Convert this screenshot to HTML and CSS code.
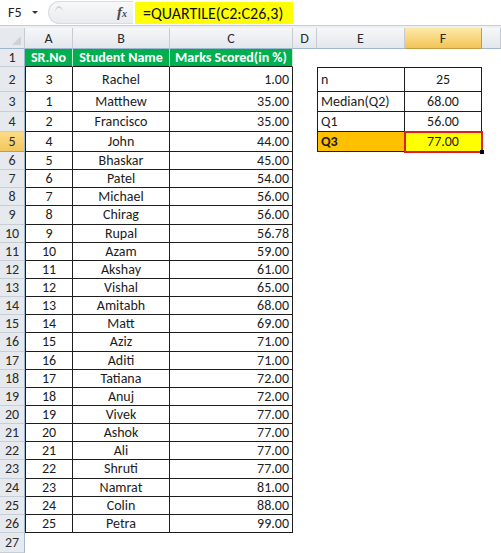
FILE: index.html
```html
<!DOCTYPE html>
<html lang="en">

<head>
    <meta charset="utf-8">
    <title>QUARTILE</title>
    <link rel="stylesheet" href="styles.css">
</head>

<body>
    <header class="formula-bar">
        <div class="name-box"><span>F5</span><span class="drop"></span></div>
        <div class="fx-zone"><span class="grip"></span><span class="fx">f<small>x</small></span></div>
        <div class="formula"><span class="formula-text">=QUARTILE(C2:C26,3)</span></div>
    </header>
    <div class="gap"></div>
    <main class="sheet">
        <div class="row heads">
            <div class="corner"><span class="tri"></span></div>
            <div class="ch">A</div>
            <div class="ch">B</div>
            <div class="ch">C</div>
            <div class="ch">D</div>
            <div class="ch">E</div>
            <div class="ch sel">F</div>
            <div class="ch"></div>
        </div>
        <div class="row r1">
            <div class="rh">1</div>
            <div class="cell hd">SR.No</div>
            <div class="cell hd">Student Name</div>
            <div class="cell hd">Marks Scored(in %)</div>
            <div class="cell"></div><div class="cell"></div><div class="cell"></div><div class="cell"></div>
        </div>
        <div class="row r2">
            <div class="rh">2</div>
            <div class="cell t tl ctr">3</div>
            <div class="cell t ctr">Rachel</div>
            <div class="cell t num">1.00</div>
            <div class="cell"></div>
            <div class="cell t tl tt">n</div>
            <div class="cell t tt ctr">25</div>
            <div class="cell"></div>
        </div>
        <div class="row r3">
            <div class="rh">3</div>
            <div class="cell t tl ctr">1</div>
            <div class="cell t ctr">Matthew</div>
            <div class="cell t num">35.00</div>
            <div class="cell"></div>
            <div class="cell t tl">Median(Q2)</div>
            <div class="cell t ctr">68.00</div>
            <div class="cell"></div>
        </div>
        <div class="row r3">
            <div class="rh">4</div>
            <div class="cell t tl ctr">2</div>
            <div class="cell t ctr">Francisco</div>
            <div class="cell t num">35.00</div>
            <div class="cell"></div>
            <div class="cell t tl">Q1</div>
            <div class="cell t ctr">56.00</div>
            <div class="cell"></div>
        </div>
        <div class="row r3">
            <div class="rh sel">5</div>
            <div class="cell t tl ctr">4</div>
            <div class="cell t ctr">John</div>
            <div class="cell t num">44.00</div>
            <div class="cell"></div>
            <div class="cell t tl q3">Q3</div>
            <div class="cell t ctr active">77.00</div>
            <div class="cell"></div>
        </div>
        <div class="row"><div class="rh">6</div><div class="cell t tl ctr">5</div><div class="cell t ctr">Bhaskar</div><div class="cell t num">45.00</div><div class="cell"></div><div class="cell"></div><div class="cell"></div><div class="cell"></div></div>
        <div class="row"><div class="rh">7</div><div class="cell t tl ctr">6</div><div class="cell t ctr">Patel</div><div class="cell t num">54.00</div><div class="cell"></div><div class="cell"></div><div class="cell"></div><div class="cell"></div></div>
        <div class="row"><div class="rh">8</div><div class="cell t tl ctr">7</div><div class="cell t ctr">Michael</div><div class="cell t num">56.00</div><div class="cell"></div><div class="cell"></div><div class="cell"></div><div class="cell"></div></div>
        <div class="row"><div class="rh">9</div><div class="cell t tl ctr">8</div><div class="cell t ctr">Chirag</div><div class="cell t num">56.00</div><div class="cell"></div><div class="cell"></div><div class="cell"></div><div class="cell"></div></div>
        <div class="row"><div class="rh">10</div><div class="cell t tl ctr">9</div><div class="cell t ctr">Rupal</div><div class="cell t num">56.78</div><div class="cell"></div><div class="cell"></div><div class="cell"></div><div class="cell"></div></div>
        <div class="row"><div class="rh">11</div><div class="cell t tl ctr">10</div><div class="cell t ctr">Azam</div><div class="cell t num">59.00</div><div class="cell"></div><div class="cell"></div><div class="cell"></div><div class="cell"></div></div>
        <div class="row"><div class="rh">12</div><div class="cell t tl ctr">11</div><div class="cell t ctr">Akshay</div><div class="cell t num">61.00</div><div class="cell"></div><div class="cell"></div><div class="cell"></div><div class="cell"></div></div>
        <div class="row"><div class="rh">13</div><div class="cell t tl ctr">12</div><div class="cell t ctr">Vishal</div><div class="cell t num">65.00</div><div class="cell"></div><div class="cell"></div><div class="cell"></div><div class="cell"></div></div>
        <div class="row"><div class="rh">14</div><div class="cell t tl ctr">13</div><div class="cell t ctr">Amitabh</div><div class="cell t num">68.00</div><div class="cell"></div><div class="cell"></div><div class="cell"></div><div class="cell"></div></div>
        <div class="row"><div class="rh">15</div><div class="cell t tl ctr">14</div><div class="cell t ctr">Matt</div><div class="cell t num">69.00</div><div class="cell"></div><div class="cell"></div><div class="cell"></div><div class="cell"></div></div>
        <div class="row"><div class="rh">16</div><div class="cell t tl ctr">15</div><div class="cell t ctr">Aziz</div><div class="cell t num">71.00</div><div class="cell"></div><div class="cell"></div><div class="cell"></div><div class="cell"></div></div>
        <div class="row"><div class="rh">17</div><div class="cell t tl ctr">16</div><div class="cell t ctr">Aditi</div><div class="cell t num">71.00</div><div class="cell"></div><div class="cell"></div><div class="cell"></div><div class="cell"></div></div>
        <div class="row"><div class="rh">18</div><div class="cell t tl ctr">17</div><div class="cell t ctr">Tatiana</div><div class="cell t num">72.00</div><div class="cell"></div><div class="cell"></div><div class="cell"></div><div class="cell"></div></div>
        <div class="row"><div class="rh">19</div><div class="cell t tl ctr">18</div><div class="cell t ctr">Anuj</div><div class="cell t num">72.00</div><div class="cell"></div><div class="cell"></div><div class="cell"></div><div class="cell"></div></div>
        <div class="row"><div class="rh">20</div><div class="cell t tl ctr">19</div><div class="cell t ctr">Vivek</div><div class="cell t num">77.00</div><div class="cell"></div><div class="cell"></div><div class="cell"></div><div class="cell"></div></div>
        <div class="row"><div class="rh">21</div><div class="cell t tl ctr">20</div><div class="cell t ctr">Ashok</div><div class="cell t num">77.00</div><div class="cell"></div><div class="cell"></div><div class="cell"></div><div class="cell"></div></div>
        <div class="row"><div class="rh">22</div><div class="cell t tl ctr">21</div><div class="cell t ctr">Ali</div><div class="cell t num">77.00</div><div class="cell"></div><div class="cell"></div><div class="cell"></div><div class="cell"></div></div>
        <div class="row"><div class="rh">23</div><div class="cell t tl ctr">22</div><div class="cell t ctr">Shruti</div><div class="cell t num">77.00</div><div class="cell"></div><div class="cell"></div><div class="cell"></div><div class="cell"></div></div>
        <div class="row"><div class="rh">24</div><div class="cell t tl ctr">23</div><div class="cell t ctr">Namrat</div><div class="cell t num">81.00</div><div class="cell"></div><div class="cell"></div><div class="cell"></div><div class="cell"></div></div>
        <div class="row"><div class="rh">25</div><div class="cell t tl ctr">24</div><div class="cell t ctr">Colin</div><div class="cell t num">88.00</div><div class="cell"></div><div class="cell"></div><div class="cell"></div><div class="cell"></div></div>
        <div class="row"><div class="rh">26</div><div class="cell t tl ctr">25</div><div class="cell t ctr">Petra</div><div class="cell t num">99.00</div><div class="cell"></div><div class="cell"></div><div class="cell"></div><div class="cell"></div></div>
        <div class="row r27"><div class="rh">27</div><div class="cell"></div><div class="cell"></div><div class="cell"></div><div class="cell"></div><div class="cell"></div><div class="cell"></div><div class="cell"></div></div>
    </main>
</body>

</html>
```

FILE: styles.css
```css
body {
    margin: 0;
    width: 501px;
    height: 553px;
    overflow: hidden;
    background-color: #ffffff;
    font-family: Carlito, Lato, "Liberation Sans", sans-serif;
    font-size: 14px;
    color: #1c1c1c;
}

/* formula bar */
.formula-bar {
    display: flex;
    height: 25px;
    border-bottom: 1px solid #c9cdd2;
    background-color: #ffffff;
}

.name-box {
    width: 45px;
    box-sizing: border-box;
    padding-left: 8px;
    display: flex;
    align-items: center;
    gap: 10px;
    font-size: 14px;
    color: #222;
}

.drop {
    width: 0;
    height: 0;
    border-left: 3px solid transparent;
    border-right: 3px solid transparent;
    border-top: 3px solid #333;
}

.fx-zone {
    width: 85px;
    margin: 1px 0 1px 3px;
    box-sizing: border-box;
    display: flex;
    align-items: center;
    justify-content: space-between;
    padding-right: 6px;
    border-radius: 12px 0 0 12px;
    border: 1px solid #d8dbe0;
    border-right: none;
    background: linear-gradient(#f7f8f9, #e9ebee);
}

.grip {
    width: 8px;
    height: 12px;
    margin-left: 6px;
    border-radius: 50%;
    border-top: 2px solid #cfd3d8;
}

.fx {
    font-family: "Liberation Serif", serif;
    font-style: italic;
    font-weight: bold;
    font-size: 15px;
    color: #4a4a4a;
}

.fx small {
    font-size: 10px;
}

.formula {
    flex: 1;
    display: flex;
    align-items: stretch;
    padding: 2px 0 1px 2px;
}

.formula-text {
    display: flex;
    align-items: center;
    padding: 0 10px 0 8px;
    background-color: #ffff00;
    font-size: 16px;
    color: #111;
}

.gap {
    height: 2px;
    background-color: #eef0f3;
}

/* sheet */
.row {
    display: grid;
    grid-template-columns: 25px 48px 97px 123px 24px 88px 77px 19px;
    height: 18.143px;
}

.heads { height: 21px; }
.r1 { height: 18px; }
.r2 { height: 25px; }
.r3 { height: 20px; }
.r27 { height: 20px; }

.corner {
    position: relative;
    background: #e6e9ee;
    border-right: 1px solid #c5cbd3;
    border-bottom: 1px solid #9eb6ce;
}

.tri {
    position: absolute;
    right: 3px;
    bottom: 3px;
    width: 0;
    height: 0;
    border-left: 9px solid transparent;
    border-bottom: 9px solid #cdd2d9;
}

.ch {
    display: flex;
    align-items: center;
    justify-content: center;
    background: linear-gradient(#f6f7f9, #e3e7ec);
    border-right: 1px solid #c5cbd3;
    border-bottom: 1px solid #9eb6ce;
    color: #2b2b2b;
}

.ch.sel {
    background: linear-gradient(#fde9a6, #f2c458);
    border-right-color: #c59b44;
    border-bottom-color: #c59b44;
}

.rh {
    display: flex;
    align-items: center;
    justify-content: center;
    background-color: #e6e9ee;
    border-right: 1px solid #9eb6ce;
    border-bottom: 1px solid #c8ced6;
    color: #2b2b2b;
}

.rh.sel {
    background: linear-gradient(#fbdc86, #f3c65e);
    border-bottom-color: #c59b44;
}

.cell {
    box-sizing: border-box;
    display: flex;
    align-items: center;
    padding: 0 3px;
    white-space: nowrap;
}

.hd {
    justify-content: center;
    background-color: #00b050;
    color: #ffffff;
    font-weight: bold;
    border-right: 1px solid #c6e8d2;
    border-bottom: 1px solid #1d1d1d;
}

.t {
    border-right: 1px solid #1d1d1d;
    border-bottom: 1px solid #1d1d1d;
}

.tl { border-left: 1px solid #1d1d1d; }
.tt { border-top: 1px solid #1d1d1d; }

.ctr { justify-content: center; }
.num { justify-content: flex-end; }

.q3 {
    background-color: #ffc000;
    font-weight: bold;
}

.active {
    position: relative;
    background-color: #ffff00;
    outline: 2px solid #e31b23;
    outline-offset: -1px;
}

.active::after {
    content: "";
    position: absolute;
    right: -3px;
    bottom: -3px;
    width: 4px;
    height: 4px;
    background-color: #000;
}
```
